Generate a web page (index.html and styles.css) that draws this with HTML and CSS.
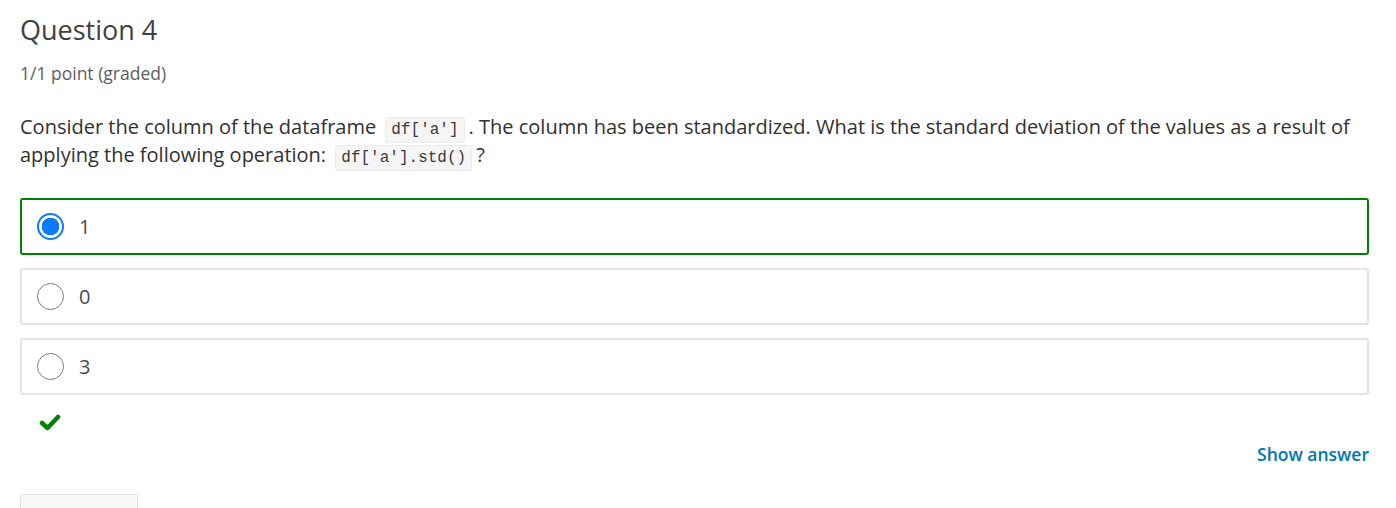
FILE: index.html
```html
<!DOCTYPE html>
<html>
<head>
<meta charset="utf-8">
<link rel="stylesheet" href="styles.css">
</head>
<body>
<div class="problem">
  <h3 class="title">Question 4</h3>
  <div class="points">1/1 point (graded)</div>
  <p class="prompt">Consider the column of the dataframe <code>df['a']</code>. The column has been standardized. What is the standard deviation of the values as a result of applying the following operation: <code>df['a'].std()</code>?</p>
  <div class="choices">
    <label class="choice correct">
      <span class="radio checked"></span>
      <span class="choice-text">1</span>
    </label>
    <label class="choice">
      <span class="radio"></span>
      <span class="choice-text">0</span>
    </label>
    <label class="choice">
      <span class="radio"></span>
      <span class="choice-text">3</span>
    </label>
  </div>
  <div class="status">
    <svg width="22" height="17" viewBox="0 0 22 17"><path d="M3 9 L8.5 14 L19 3" fill="none" stroke="#008100" stroke-width="4.5" stroke-linecap="round" stroke-linejoin="round"/></svg>
  </div>
  <div class="actions">
    <a class="show-answer">Show answer</a>
  </div>
  <div class="submit-row"><span class="submit"></span></div>
</div>
</body>
</html>
```

FILE: styles.css
```css
html, body {
  margin: 0;
  padding: 0;
  background: #fff;
  overflow: hidden;
}
body {
  font-family: "Open Sans", sans-serif;
  color: #313131;
}
.problem {
  padding: 0 27px 0 20px;
}
.title {
  margin: 0;
  padding-top: 12px;
  font-size: 27px;
  font-weight: 400;
  line-height: 36px;
  color: #414141;
}
.points {
  margin-top: 14px;
  font-size: 17.5px;
  line-height: 22px;
  color: #5e5e5e;
}
.prompt {
  margin: 29px 0 0 0;
  font-size: 20px;
  line-height: 28px;
  color: #313131;
}
code {
  font-family: "Liberation Mono", "DejaVu Sans Mono", monospace;
  font-size: 16px;
  line-height: 1;
  background: #f5f5f5;
  border: 1px solid #ececec;
  border-radius: 3px;
  padding: 3px 5px;
  margin: 0 4px;
  color: #3a3a3a;
}
.choices {
  margin-top: 29px;
  display: flex;
  flex-direction: column;
  gap: 13px;
}
.choice {
  display: flex;
  align-items: center;
  height: 53px;
  border: 2px solid #e4e4e4;
  border-radius: 3px;
  padding-left: 15px;
}
.choice.correct {
  border-color: #008100;
}
.radio {
  width: 27px;
  height: 27px;
  border: 1.5px solid #7a7a7a;
  border-radius: 50%;
  box-sizing: border-box;
  display: inline-block;
  flex: none;
}
.radio.checked {
  border: 2px solid #0a7bff;
  background: radial-gradient(circle, #0a7bff 0 8.5px, #fff 9px);
}
.choice-text {
  margin-left: 15px;
  font-size: 20px;
  color: #4a4a4a;
}
.status {
  margin-top: 19px;
  padding-left: 19px;
  height: 24px;
}
.actions {
  display: flex;
  justify-content: flex-end;
  margin-top: 4px;
}
.show-answer {
  color: #0075b4;
  font-size: 17.5px;
  font-weight: 600;
  line-height: 24px;
}
.submit-row {
  margin-top: 28px;
}
.submit {
  display: block;
  width: 116px;
  height: 30px;
  background: #f7f7f7;
  border: 1px solid #e4e4e4;
  border-radius: 3px;
}
```
